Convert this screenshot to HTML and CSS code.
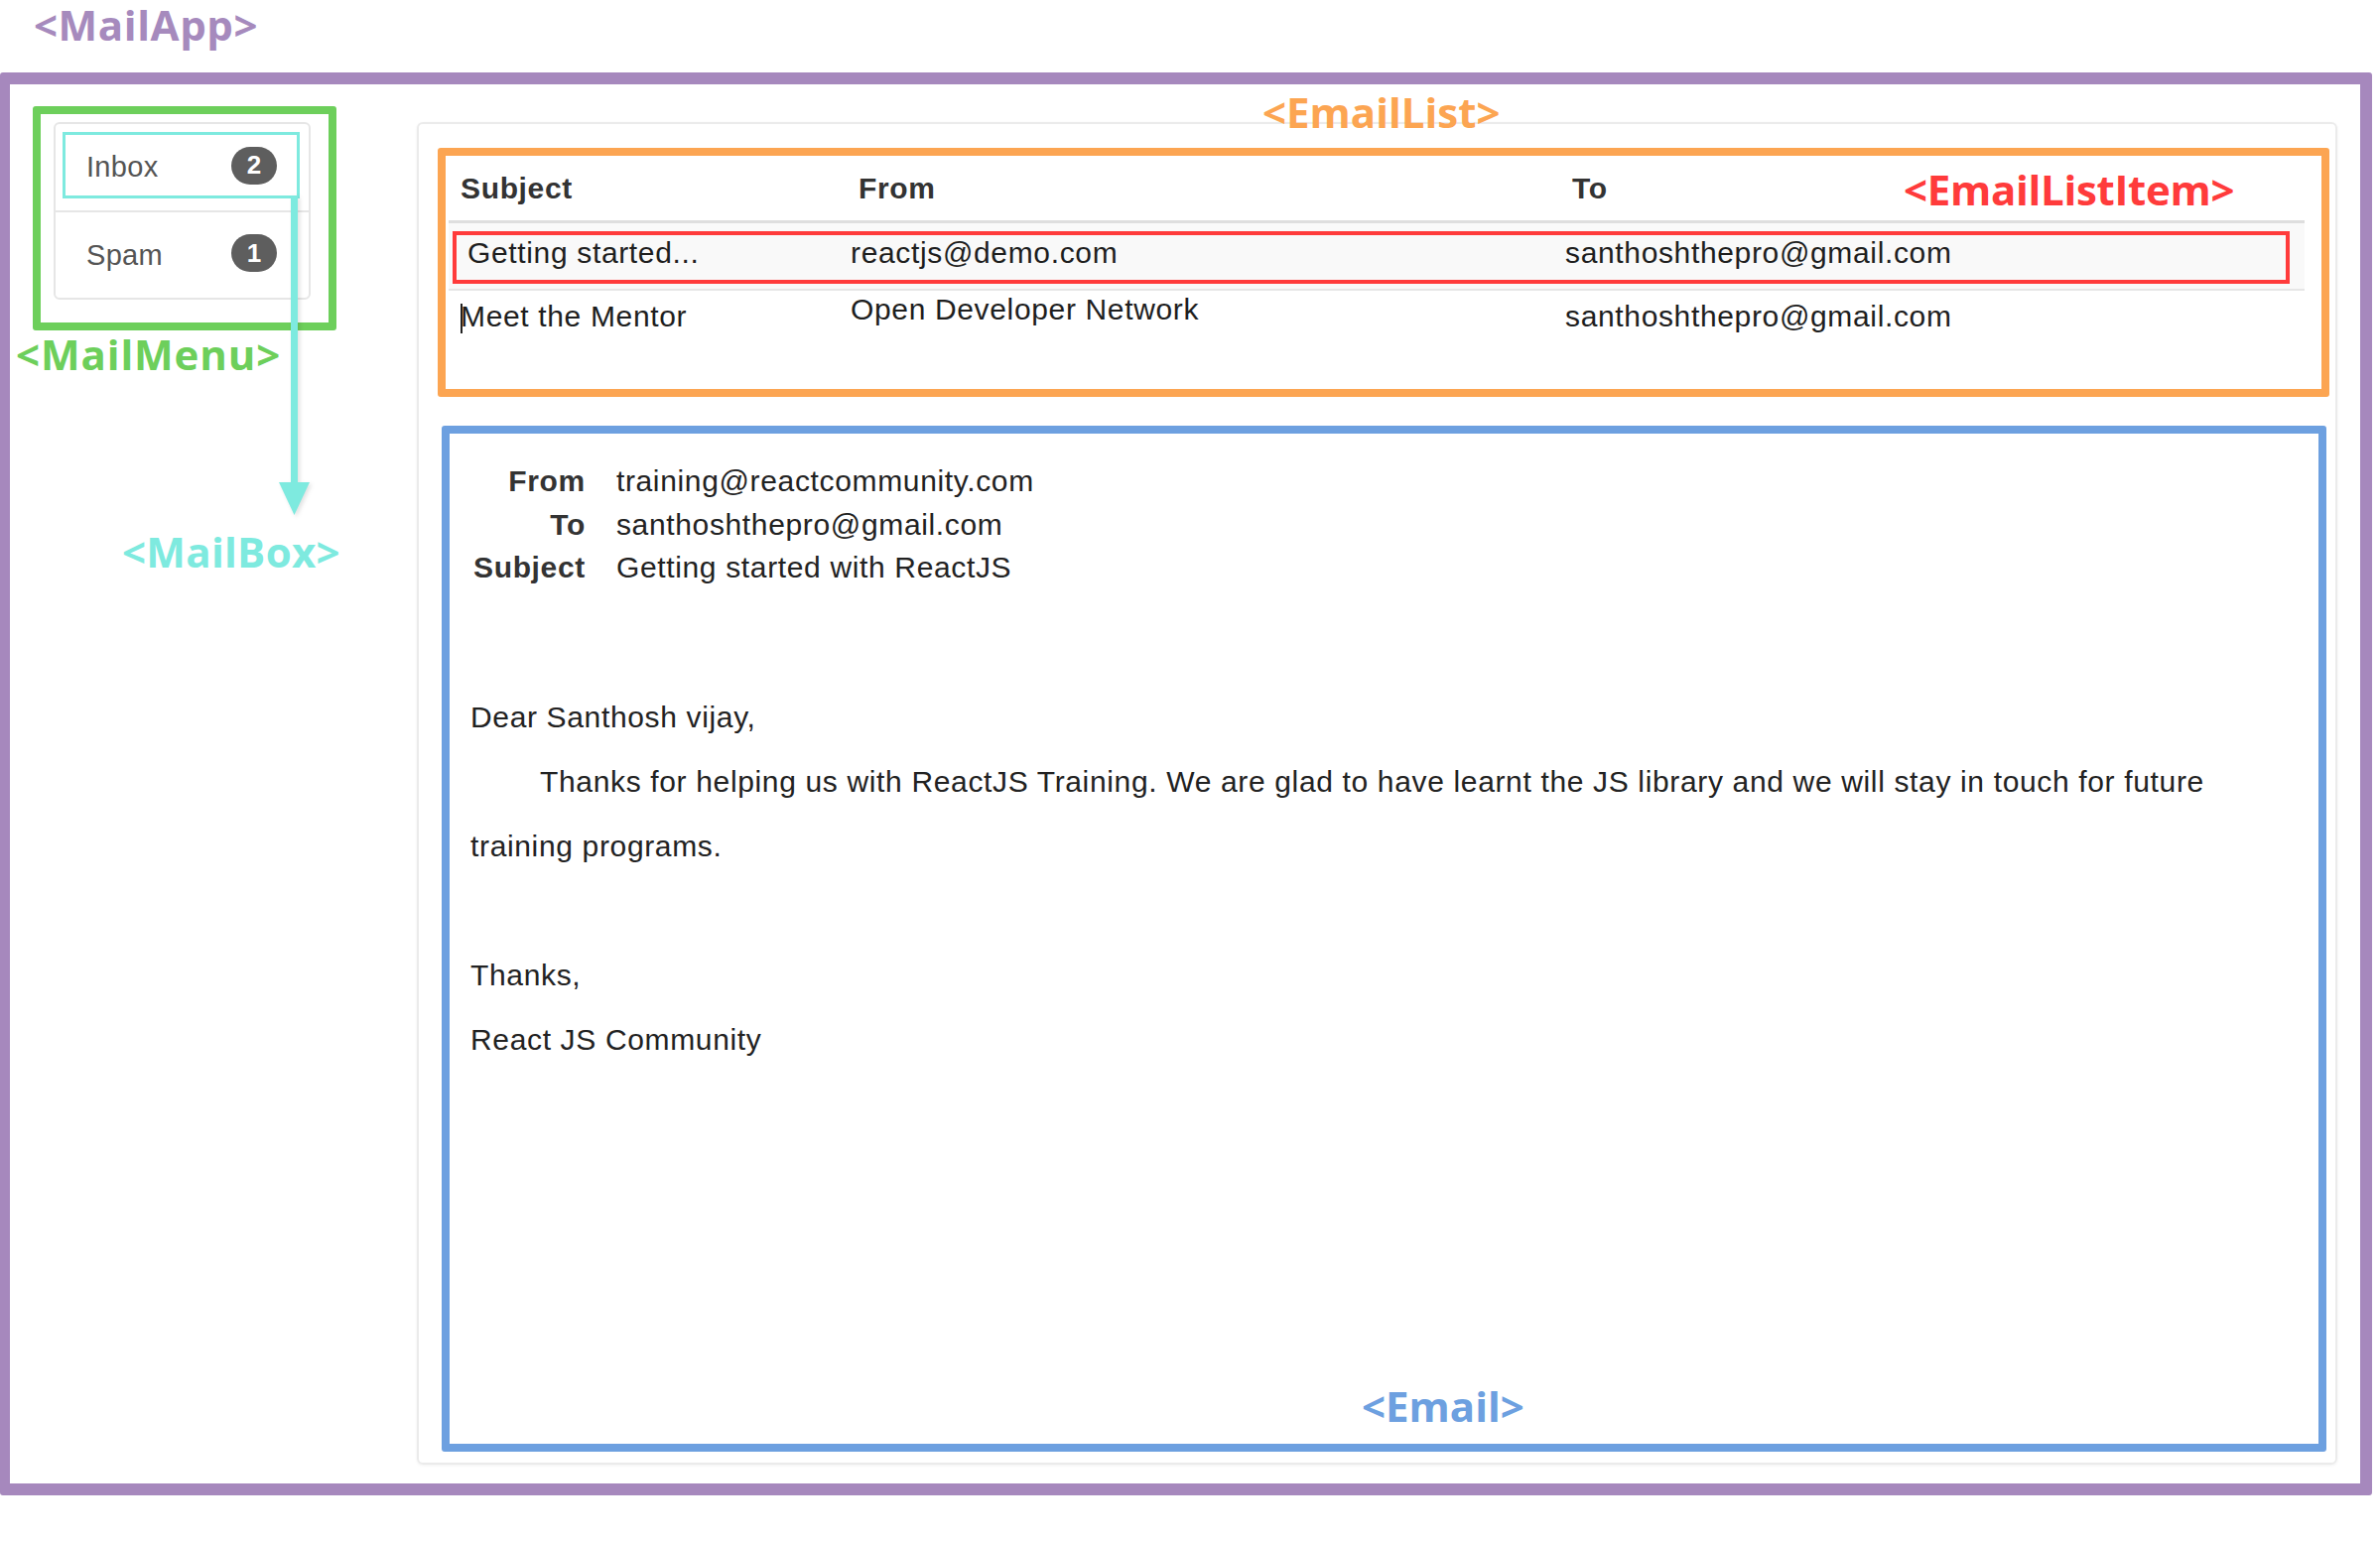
FILE: index.html
```html
<!DOCTYPE html>
<html>
<head>
<meta charset="utf-8">
<title>MailApp</title>
<link rel="stylesheet" href="styles.css">
</head>
<body>
<div class="app-title">&lt;MailApp&gt;</div>
<div class="mailapp">
  <aside class="mailmenu">
    <ul class="menu-list">
      <li class="menu-item"><span class="menu-name">Inbox</span><span class="badge">2</span></li>
      <li class="menu-item"><span class="menu-name">Spam</span><span class="badge">1</span></li>
    </ul>
  </aside>
  <main class="panel">
    <section class="email-list">
      <div class="row head">
        <div class="cell">Subject</div>
        <div class="cell">From</div>
        <div class="cell">To</div>
      </div>
      <div class="row item selected">
        <div class="cell c1">Getting started...</div>
        <div class="cell c2">reactjs@demo.com</div>
        <div class="cell c3">santhoshthepro@gmail.com</div>
        <div class="item-outline"></div>
      </div>
      <div class="row item second">
        <div class="cell c1"><span class="caret"></span>Meet the Mentor</div>
        <div class="cell c2 raised">Open Developer Network</div>
        <div class="cell c3">santhoshthepro@gmail.com</div>
      </div>
    </section>
    <section class="email">
      <div class="email-head">
        <div class="lbl">From</div><div class="val">training@reactcommunity.com</div>
        <div class="lbl">To</div><div class="val">santhoshthepro@gmail.com</div>
        <div class="lbl">Subject</div><div class="val">Getting started with ReactJS</div>
      </div>
      <div class="email-body">
        <p>Dear Santhosh vijay,</p>
        <p class="indent">Thanks for helping us with ReactJS Training. We are glad to have learnt the JS library and we will stay in touch for future training programs.</p>
        <p class="gap">Thanks,</p>
        <p>React JS Community</p>
      </div>
    </section>
  </main>
</div>

<div class="mailbox-outline"></div>
<svg class="mailbox-arrow" width="40" height="330" viewBox="0 0 40 330">
  <rect x="15" y="2" width="7" height="292" fill="#7eeadf"/>
  <polygon points="3,291 34,291 18.5,324" fill="#7eeadf"/>
</svg>
<div class="tag tag-menu">&lt;MailMenu&gt;</div>
<div class="tag tag-box">&lt;MailBox&gt;</div>
<div class="tag tag-list">&lt;EmailList&gt;</div>
<div class="tag tag-item">&lt;EmailListItem&gt;</div>
<div class="tag tag-email">&lt;Email&gt;</div>
</body>
</html>
```

FILE: styles.css
```css
* { box-sizing: border-box; }

html, body {
  margin: 0;
  padding: 0;
  background: #fff;
}

body {
  position: relative;
  width: 2398px;
  height: 1553px;
  overflow: hidden;
  font-family: "Liberation Sans", Arial, sans-serif;
  color: #222;
}

/* ---------- annotation labels ---------- */
.app-title {
  height: 73px;
  padding-left: 34px;
  font-family: "Open Sans", sans-serif;
  font-weight: 700;
  font-size: 42px;
  line-height: 50px;
  letter-spacing: 0.6px;
  color: #a68abd;
  white-space: nowrap;
}

.tag {
  position: absolute;
  font-family: "Open Sans", sans-serif;
  font-weight: 700;
  font-size: 42px;
  line-height: 42px;
  white-space: nowrap;
}

.tag-menu  { left: 16px;   top: 336px;  color: #6dcf5b; letter-spacing: 0.9px; }
.tag-box   { left: 123px;  top: 535px;  color: #7eeadf; letter-spacing: 0.3px; }
.tag-list  { left: 1272px; top: 92px;   color: #fca552; }
.tag-item  { left: 1918px; top: 170px;  color: #ff3b3b; letter-spacing: -0.3px; }
.tag-email { left: 1372px; top: 1396px; color: #6da0e0; }

.mailbox-outline {
  position: absolute;
  left: 63px;
  top: 133px;
  width: 239px;
  height: 67px;
  border: 3px solid #7eeadf;
}

.mailbox-arrow {
  position: absolute;
  left: 278px;
  top: 195px;
  filter: drop-shadow(2px 2px 2px rgba(0, 0, 0, 0.12));
}

/* ---------- app frame ---------- */
.mailapp {
  width: 2390px;
  height: 1434px;
  border: 12px solid #a688bd;
  border-left-width: 10px;
  border-radius: 3px;
  display: flex;
  align-items: flex-start;
  padding: 22px 23px 19px 23px;
}

/* ---------- menu ---------- */
.mailmenu {
  flex: none;
  width: 306px;
  height: 226px;
  border: 8px solid #6dcf5b;
  border-radius: 3px;
  padding: 8px 18px 0 13px;
}

.menu-list {
  list-style: none;
  margin: 0;
  padding: 0;
  width: 259px;
  border: 2px solid #e6e6e6;
  border-radius: 6px;
}

.menu-item {
  height: 87px;
  display: flex;
  align-items: center;
  justify-content: space-between;
  padding: 0 32px 0 31px;
  font-size: 29px;
  letter-spacing: 0.3px;
  color: #555;
}

.menu-item + .menu-item {
  height: 88px;
  border-top: 2px solid #e6e6e6;
}

.badge {
  width: 46px;
  height: 38px;
  margin-bottom: 4px;
  border-radius: 19px;
  background: #5e5e5e;
  color: #fff;
  font-weight: 700;
  font-size: 26px;
  letter-spacing: 0;
  display: flex;
  align-items: center;
  justify-content: center;
}

/* ---------- main panel ---------- */
.panel {
  flex: 1;
  align-self: stretch;
  margin: 16px 0 0 81px;
  border: 2px solid #ebebeb;
  border-radius: 6px;
  box-shadow: 0 1px 3px rgba(0, 0, 0, 0.06);
  display: flex;
  flex-direction: column;
  padding: 24px 6px 11px 19px;
}

/* ---------- email list ---------- */
.email-list {
  flex: none;
  height: 251px;
  border: 8px solid #fca552;
  border-radius: 3px;
  padding: 0 17px 0 3px;
}

.row {
  position: relative;
  display: grid;
  grid-template-columns: 401px 719px 1fr;
  align-items: start;
}

.cell {
  font-size: 30px;
  line-height: 36px;
  letter-spacing: 0.65px;
  white-space: nowrap;
  color: #1e1e1e;
}

.head {
  height: 68px;
  border-bottom: 3px solid #dedede;
}

.head .cell {
  padding: 15px 0 0 12px;
  font-weight: 700;
  color: #333;
}

.selected {
  height: 68px;
  background: #f9f9f9;
  border-bottom: 2px solid #e6e6e6;
}

.selected .cell { padding-top: 12px; }
.second .cell { padding-top: 8px; }
.second .cell.raised { padding-top: 1px; }

.item .c1 { padding-left: 12px; }
.selected .c1 { padding-left: 19px; }
.item .c2 { padding-left: 4px; }
.item .c3 { padding-left: 5px; }

.item-outline {
  position: absolute;
  left: 4px;
  right: 15px;
  top: 8px;
  bottom: 5px;
  border: 4px solid #ff3b3b;
}

.caret {
  display: inline-block;
  width: 2px;
  height: 30px;
  margin-right: -2px;
  vertical-align: -7px;
  background: #222;
}

/* ---------- email ---------- */
.email {
  flex: 1;
  margin: 29px 3px 0 4px;
  border: 8px solid #6da0e0;
  border-radius: 3px;
  padding-top: 26px;
}

.email-head {
  display: grid;
  grid-template-columns: auto 1fr;
  column-gap: 31px;
  padding-left: 24px;
  font-size: 30px;
  line-height: 43.5px;
  letter-spacing: 0.65px;
}

.lbl {
  font-weight: 700;
  text-align: right;
  color: #333;
}

.val { color: #222; }

.email-body {
  margin-top: 96px;
  padding: 0 40px 0 21px;
  font-size: 30px;
  line-height: 65px;
  letter-spacing: 0.65px;
  color: #222;
}

.email-body p { margin: 0; }
.email-body .indent { text-indent: 70px; }
.email-body .gap { margin-top: 65px; }
```
